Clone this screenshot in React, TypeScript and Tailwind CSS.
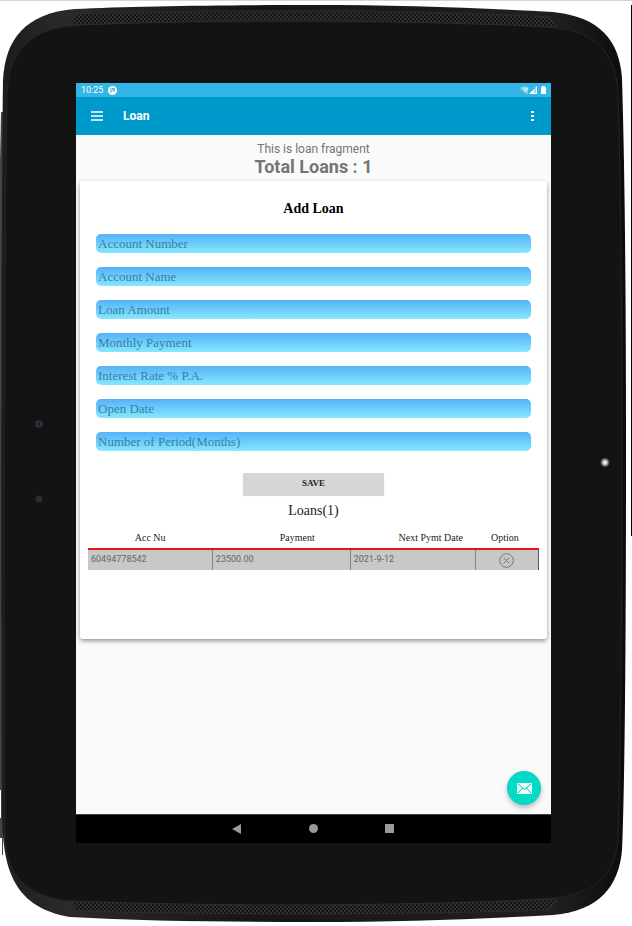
import React from "react";

const fields = [
  "Account Number",
  "Account Name",
  "Loan Amount",
  "Monthly Payment",
  "Interest Rate % P.A.",
  "Open Date",
  "Number of Period(Months)",
];

const loans = [{ account: "60494778542", payment: "23500.00", next: "2021-9-12" }];

function TabletFrame() {
  return (
    <svg
      className="absolute inset-0 h-full w-full"
      viewBox="0 0 632 926"
      preserveAspectRatio="none"
      aria-hidden="true"
    >
      <defs>
        <pattern id="mesh" width="4" height="4" patternUnits="userSpaceOnUse">
          <rect width="4" height="4" fill="#303030" />
          <circle cx="1" cy="1" r="1" fill="#0a0a0a" />
          <circle cx="3" cy="3" r="1" fill="#0a0a0a" />
        </pattern>
        <linearGradient id="rim" x1="0" y1="0" x2="1" y2="0">
          <stop offset="0" stopColor="#1c1c1c" />
          <stop offset="0.1" stopColor="#2a2a2a" />
          <stop offset="0.4" stopColor="#161616" />
          <stop offset="0.88" stopColor="#202020" />
          <stop offset="1" stopColor="#0c0c0c" />
        </linearGradient>
        <radialGradient id="glow">
          <stop offset="0" stopColor="#ffffff" />
          <stop offset="0.35" stopColor="#d0d0d0" />
          <stop offset="1" stopColor="#131313" />
        </radialGradient>
      </defs>
      <rect width="632" height="1" fill="#d6d4d6" />
      <rect x="631" y="5" width="1" height="531" fill="#000" />
      <path d="M1 112H3V855H2V838H0V818H1V790H0V160Z" fill="#444" />
      <path
        d="M313 5C230 5 130 6 75 9C25 13 5 40 3 80C1 220 1 640 2 820C4 860 8 907 70 917C140 921 230 922 313 922C400 922 480 919 553 915C600 911 619 885 622 850C625 780 626 620 626 460C626 300 625 180 622 78C619 40 600 17 553 12C480 8 400 5 313 5Z"
        fill="url(#rim)"
      />
      <path
        d="M313 20C230 20 130 22 69 26C30 31 11 50 7 90C4 240 4 680 5 840C8 872 22 896 70 901C140 905 230 906 313 906C400 906 480 903 553 898C595 894 614 875 618 842C621 720 622 600 622 460C622 320 621 200 618 90C614 52 595 32 557 28C480 22 400 20 313 20Z"
        fill="#131313"
        stroke="#242424"
      />
      <path d="M77 14C230 9 400 9 549 17L557 27C400 20 230 19 70 25Z" fill="url(#mesh)" stroke="#2c2c2c" />
      <path d="M70 901C230 907 400 906 557 899L549 910C400 915 230 915 77 911Z" fill="url(#mesh)" stroke="#2c2c2c" />
      <circle cx="39" cy="424" r="4" fill="#292b36" />
      <circle cx="39" cy="424" r="2" fill="#161824" stroke="#363845" />
      <circle cx="39" cy="499" r="3.5" fill="#2d2d2d" />
      <circle cx="605" cy="462.500" r="5" fill="url(#glow)" />
    </svg>
  );
}

function StatusBar() {
  return (
    <div className="flex h-[14px] items-center bg-[#33b5e5] pr-1 pl-[5px] text-white">
      <span className="text-[9px] leading-[14px]">10:25</span>
      <svg className="ml-[5px] size-[9px]" viewBox="0 0 9 9" aria-hidden="true">
        <circle cx="4.500" cy="4.500" r="4.500" fill="#fff" />
        <path d="M3 2V7M5 2V5H6.500V2.500H4" fill="none" stroke="#33b5e5" />
      </svg>
      <svg className="ml-auto h-[9px] w-[27px]" viewBox="0 0 27 9" aria-hidden="true">
        <path d="M0 2Q4.500 -1 9 2L5 7Z" fill="#fff" opacity=".5" />
        <path d="M4 3H8M5 5H8M6 7H8" stroke="#fff" opacity=".7" />
        <path d="M9 8L17 0V8Z" fill="#fff" />
        <path d="M15 2V7" stroke="#33b5e5" />
        <path d="M21 1H22V0H25V1H26V8H21Z" fill="#fff" />
      </svg>
    </div>
  );
}

function AppBar() {
  return (
    <header className="flex h-[38px] items-center bg-[#0099cc] text-white">
      <button type="button" aria-label="Open menu" className="ml-[15px]">
        <svg className="h-[10px] w-3" viewBox="0 0 12 10">
          <path d="M0 1H12M0 5H12M0 9H12" stroke="#fff" strokeWidth="1.500" />
        </svg>
      </button>
      <h1 className="ml-5 text-[12px] leading-4 font-bold">Loan</h1>
      <button type="button" aria-label="More options" className="mr-4 ml-auto">
        <svg className="h-3 w-1" viewBox="0 0 4 12">
          <path d="M0 1H3V3H0ZM0 5H3V7H0ZM0 9H3V11H0Z" fill="#fff" />
        </svg>
      </button>
    </header>
  );
}

function LoanTable() {
  return (
    <table className="w-full table-fixed border-collapse">
      <colgroup>
        <col className="w-[27.6%]" />
        <col className="w-[30.6%]" />
        <col className="w-[27.8%]" />
        <col className="w-[14%]" />
      </colgroup>
      <thead className="font-[Liberation_Serif,serif] text-[10px] leading-3 text-[#222]">
        <tr className="h-[22px] border-b-2 border-[#e01818] whitespace-nowrap">
          <th className="p-0 font-normal">Acc Nu</th>
          <th className="p-0 pl-8 font-normal">Payment</th>
          <th className="p-0 pl-9 font-normal">Next Pymt Date</th>
          <th className="p-0 pr-1 font-normal">Option</th>
        </tr>
      </thead>
      <tbody className="bg-[#c8c8c8] text-[9px] text-[#666]">
        {loans.map((loan) => (
          <tr key={loan.account} className="h-[21px]">
            <td className="border-r border-[#858585] p-0 pl-[3px]">{loan.account}</td>
            <td className="border-r border-[#858585] p-0 pl-[3px]">{loan.payment}</td>
            <td className="border-r border-[#858585] p-0 pl-[3px]">{loan.next}</td>
            <td className="border-r border-[#555] p-0">
              <button type="button" aria-label="Delete loan" className="mx-auto block">
                <svg className="size-[15px]" viewBox="0 0 15 15" fill="none" stroke="#777">
                  <circle cx="7.500" cy="7.500" r="6.800" />
                  <path d="M4.500 4.500L10.500 10.500M10.500 4.500L4.500 10.500" />
                </svg>
              </button>
            </td>
          </tr>
        ))}
      </tbody>
    </table>
  );
}

function NavBar() {
  return (
    <nav className="flex h-[29px] items-center justify-center gap-[64px] border-t border-[#444] bg-black">
      <button type="button" aria-label="Back">
        <svg className="size-3" viewBox="0 0 12 12">
          <path d="M0 6L9 1V11Z" fill="#999" />
        </svg>
      </button>
      <button type="button" aria-label="Home">
        <svg className="size-3" viewBox="0 0 12 12">
          <circle cx="5.500" cy="5.500" r="4.500" fill="#999" />
        </svg>
      </button>
      <button type="button" aria-label="Recent apps">
        <svg className="size-3" viewBox="0 0 12 12">
          <rect x="1" y="1" width="9" height="9" fill="#999" />
        </svg>
      </button>
    </nav>
  );
}

export default function App() {
  return (
    <div className="relative flex min-h-screen flex-col bg-white pt-[83px] pr-[81px] pb-[83px] pl-[76px] font-[Roboto,sans-serif]">
      <TabletFrame />
      <div className="relative flex grow flex-col bg-[#fafafa]">
        <StatusBar />
        <AppBar />
        <main className="relative grow px-1 pt-[6px] pb-4">
          <div className="text-center text-[#757575]">
            <p className="text-[12px] leading-4">This is loan fragment</p>
            <p className="text-[18px] leading-5 font-bold">Total Loans : 1</p>
          </div>
          <section className="mt-1 rounded-[3px] bg-white px-2 pt-5 pb-[69px] shadow-[0_2px_4px_rgba(0,0,0,0.4)]">
            <form className="font-[Liberation_Serif,serif]" onSubmit={(e) => e.preventDefault()}>
              <h2 className="text-center text-[14px] leading-4 font-bold text-black">Add Loan</h2>
              <div className="mt-[17px] flex flex-col gap-[14px] px-2">
                {fields.map((field) => (
                  <input
                    key={field}
                    aria-label={field}
                    placeholder={field}
                    className="h-[19px] w-full rounded-[5px] bg-linear-to-b from-[#56b1f9] to-[#86e8fc] px-[2px] text-[13px] text-[#225] outline-none placeholder:text-[#397fa3]"
                  />
                ))}
              </div>
              <button
                type="submit"
                className="mx-auto mt-[22px] block h-[22px] w-[141px] rounded-[1px] bg-[#d6d6d6] text-[9px] font-bold text-[#222] shadow-[0_1px_1px_rgba(0,0,0,0.2)]"
              >
                SAVE
              </button>
            </form>
            <h3 className="mt-2 mb-2 text-center font-[Liberation_Serif,serif] text-[14px] leading-4 text-[#222]">
              Loans({loans.length})
            </h3>
            <LoanTable />
          </section>
          <button
            type="button"
            aria-label="Send message"
            className="absolute right-[10px] bottom-[9px] flex size-[34px] items-center justify-center rounded-full bg-[#03dac5] shadow-[0_3px_5px_rgba(0,0,0,0.25)]"
          >
            <svg className="h-[11px] w-[15px]" viewBox="0 0 15 11">
              <rect width="15" height="11" rx="1" fill="#e8fffc" />
              <path d="M1 1L7.500 6.500L14 1M1 10L5.500 5M14 10L9.500 5" fill="none" stroke="#03bfae" />
            </svg>
          </button>
        </main>
        <NavBar />
      </div>
    </div>
  );
}
